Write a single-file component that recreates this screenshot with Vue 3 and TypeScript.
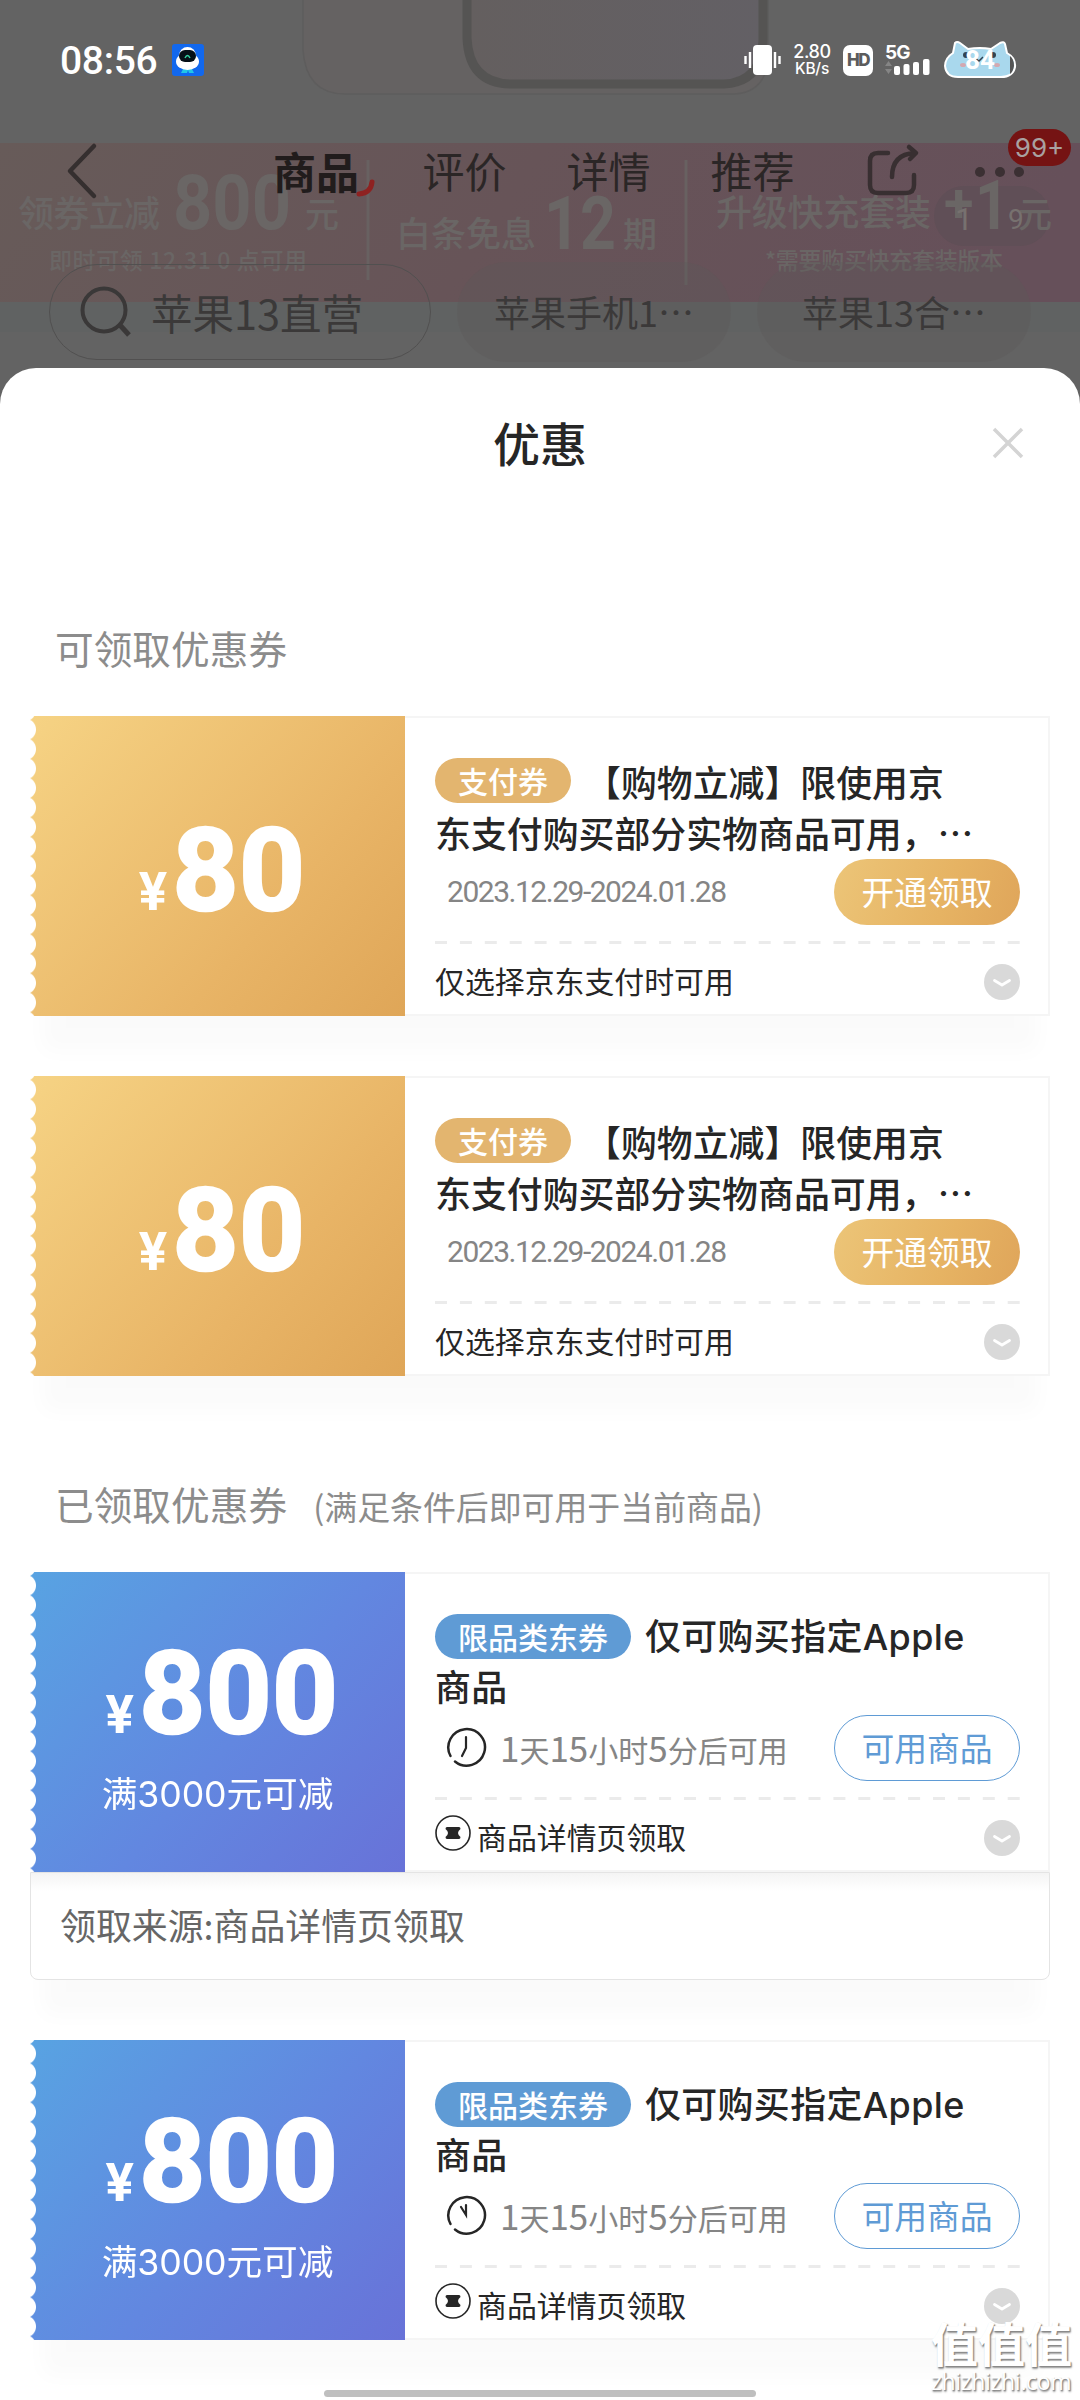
<script setup lang="ts">
interface Coupon {
  id: number
  tone: 'gold' | 'blue'
  amount: string
  condition?: string
  tag: string
  lines: [string, string]
  date?: string
  countdown?: { text: string; big: boolean }[]
  hands?: string
  action: string
  foot: string
  note?: string
}

interface Section {
  title: string
  hint?: string
  coupons: Coupon[]
}

const countdown = [
  { text: '1', big: true },
  { text: '天', big: false },
  { text: '15', big: true },
  { text: '小时', big: false },
  { text: '5', big: true },
  { text: '分后可用', big: false },
]

const gold = (id: number): Coupon => ({
  id,
  tone: 'gold',
  amount: '80',
  tag: '支付券',
  lines: ['【购物立减】限使用京', '东支付购买部分实物商品可用，⋯'],
  date: '2023.12.29-2024.01.28',
  action: '开通领取',
  foot: '仅选择京东支付时可用',
})

const blue = (id: number, hands: string, note?: string): Coupon => ({
  id,
  tone: 'blue',
  amount: '800',
  condition: '满3000元可减',
  tag: '限品类东券',
  lines: ['仅可购买指定Apple', '商品'],
  countdown,
  hands,
  action: '可用商品',
  foot: '商品详情页领取',
  note,
})

const sections: Section[] = [
  { title: '可领取优惠券', coupons: [gold(1), gold(2)] },
  {
    title: '已领取优惠券',
    hint: '(满足条件后即可用于当前商品)',
    coupons: [
      blue(3, 'M21 11V22L17 30', '领取来源:商品详情页领取'),
      blue(4, 'M21 11V21L16 13'),
    ],
  },
]

const tabs = ['商品', '评价', '详情', '推荐']
</script>

<template>
  <div class="screen">
    <svg class="scene" width="1080" height="400" viewBox="0 0 1080 400">
      <defs>
        <linearGradient id="banner" x1="0" x2="1" y1="0" y2="0.1">
          <stop offset="0" stop-color="#675b59" />
          <stop offset="0.5" stop-color="#675458" />
          <stop offset="1" stop-color="#66505a" />
        </linearGradient>
        <linearGradient id="glass" x1="0" x2="1" y1="0" y2="0">
          <stop offset="0" stop-color="#645f5f" />
          <stop offset="1" stop-color="#636065" />
        </linearGradient>
      </defs>
      <path d="M303 -5V50Q306 94 345 94H735Q765 92 768 60V-5Z" fill="#656262" stroke="#5e5d5d" stroke-width="1.5" />
      <path d="M467 -5V38Q469 84 512 84H724Q762 82 763 40V-5Z" fill="url(#glass)" stroke="#555453" stroke-width="9" />
      <rect y="143" width="1080" height="159" fill="url(#banner)" />
      <rect y="302" width="1080" height="30" fill="#606262" />
      <path d="M368 160V280M686 160V285" stroke="#686161" stroke-width="3" />
      <g class="promo">
        <text x="18" y="227" font-size="36" textLength="142">领券立减</text>
        <text x="173" y="229" font-size="76" class="num" textLength="118" lengthAdjust="spacingAndGlyphs">800</text>
        <text x="305" y="227" font-size="34">元</text>
        <text x="49" y="269" font-size="23" textLength="258">即时可领 12.31 0 点可用</text>
        <text x="396" y="247" font-size="35" textLength="140">白条免息</text>
        <text x="544" y="249" font-size="74" class="num" textLength="72" lengthAdjust="spacingAndGlyphs">12</text>
        <text x="623" y="247" font-size="34">期</text>
        <text x="716" y="226" font-size="36" textLength="215">升级快充套装</text>
        <rect x="934" y="186" width="116" height="60" rx="30" fill="#604f57" />
        <text x="944" y="222" font-size="54" class="num">+</text>
        <text x="975" y="229" font-size="68" class="num" textLength="34" lengthAdjust="spacingAndGlyphs">1</text>
        <text x="1018" y="227" font-size="34">元</text>
        <text x="765" y="269" font-size="23" textLength="238">*需要购买快充套装版本</text>
      </g>
      <text x="955" y="230" font-size="32" fill="#77716f" class="page">1</text>
      <text x="1008" y="229" font-size="28" fill="#77716f" class="page">9</text>
    </svg>

    <header class="status">
      <span class="clock">08:56</span>
      <svg class="app" width="32" height="32" viewBox="0 0 32 32">
        <rect width="32" height="32" rx="3" fill="#1268ee" />
        <path d="M11 25L9 29H15L16 26L17 29H22L20 25Z" fill="#22c6e6" />
        <ellipse cx="15.500" cy="17.500" rx="11.500" ry="8.500" fill="#fff" />
        <circle cx="15.500" cy="11.500" r="8.500" fill="#fff" />
        <rect x="7" y="6" width="17" height="12" rx="6" fill="#061018" />
        <path d="M13 14Q15.500 9 18 14" fill="none" stroke="#35d2a2" stroke-width="1.500" />
      </svg>
      <span class="grow"></span>
      <svg width="38" height="34" viewBox="0 0 38 34" fill="#fff">
        <rect x="9" y="2" width="19" height="30" rx="4" />
        <path d="M1.500 13V21M6 9V25M31 9V25M35.500 13V21" stroke="#fff" stroke-width="2.400" />
      </svg>
      <span class="speed"><b>2.80</b><b class="unit">KB/s</b></span>
      <span class="hd">HD</span>
      <svg class="signal" width="46" height="38" viewBox="0 -4 46 38" fill="#fff">
        <text x="0" y="16" font-size="19" class="g5">5G</text>
        <rect x="9" y="23" width="6" height="9" rx="2" />
        <rect x="18.500" y="21" width="6" height="11" rx="2" />
        <rect x="28" y="19" width="6" height="13" rx="2" />
        <rect x="38" y="16" width="6.500" height="16" rx="2" />
        <path d="M0 23L3.500 18L7 23ZM0 26L3.500 31L7 26Z" fill="#858585" />
      </svg>
      <svg class="battery" width="74" height="40" viewBox="0 0 74 40">
        <path d="M10 13L12 3Q14 1 17 3L25 9Q37 7 48 9L57 3Q61 1 62 4L64 13Q73 18 72 27Q70 37 58 37H15Q3 37 2 26Q2 18 10 13Z" fill="#a9d8ed" stroke="#fff" stroke-width="2" />
        <path d="M67 16Q71 19 71 26Q70 32 67 34Z" fill="#555" />
        <circle cx="23" cy="15" r="3" fill="#324350" /><circle cx="50" cy="15" r="3" fill="#324350" />
        <path d="M32 18L36 21L40 17" fill="none" stroke="#324350" stroke-width="1.500" />
        <ellipse cx="20" cy="25" rx="3" ry="2" fill="#d3a9b1" /><ellipse cx="54" cy="25" rx="3" ry="2" fill="#d3a9b1" />
        <text x="22" y="29" font-size="26" class="level" fill="#fff">84</text>
      </svg>
    </header>

    <nav class="nav">
      <svg class="back" width="34" height="60" viewBox="0 0 34 60">
        <path d="M28 5L4 30L28 55" fill="none" stroke="#352f2f" stroke-width="4.500" stroke-linecap="round" stroke-linejoin="round" />
      </svg>
      <div class="tabs">
        <span v-for="(tab, i) in tabs" :key="tab" class="tab" :class="{ active: i === 0 }">
          {{ tab }}
          <svg v-if="i === 0" class="hook" width="20" height="20" viewBox="0 0 20 20">
            <path d="M3 16Q15 15 16 4" fill="none" stroke="#8e2221" stroke-width="5" stroke-linecap="round" />
          </svg>
        </span>
      </div>
      <svg class="share" width="56" height="56" viewBox="0 0 56 56" fill="none" stroke="#382f31" stroke-width="4.500" stroke-linecap="round" stroke-linejoin="round">
        <path d="M22 11H12Q4 11 4 19V43Q4 51 12 51H40Q48 51 48 43V33" />
        <path d="M26 35Q26 12 49 11M43 5L50 11L44 17" />
      </svg>
      <div class="more">
        <i></i><i></i><i></i>
        <span class="badge">99+</span>
      </div>
    </nav>

    <div class="chips">
      <div class="chip search">
        <svg width="54" height="54" viewBox="0 0 54 54" fill="none" stroke="#3a3838" stroke-width="4">
          <circle cx="25" cy="25" r="21.500" /><path d="M40 39L50 50" stroke-width="5" />
        </svg>
        <span>苹果13直营</span>
      </div>
      <div class="chip">苹果手机1⋯</div>
      <div class="chip">苹果13合⋯</div>
    </div>

    <main class="sheet">
      <div class="head">
        <h1>优惠</h1>
        <svg class="close" width="34" height="34" viewBox="0 0 34 34">
          <path d="M3 3L31 31M31 3L3 31" stroke="#d4d4d4" stroke-width="3.500" />
        </svg>
      </div>

      <section v-for="s in sections" :key="s.title">
        <h2>{{ s.title }}<small v-if="s.hint">{{ s.hint }}</small></h2>
        <article v-for="c in s.coupons" :key="c.id" class="coupon" :class="c.tone">
          <div class="card">
            <div class="stub">
              <div class="price"><span class="yen">¥</span>{{ c.amount }}</div>
              <div v-if="c.condition" class="cond">{{ c.condition }}</div>
            </div>
            <div class="body">
              <div class="line"><span class="tag">{{ c.tag }}</span>{{ c.lines[0] }}</div>
              <div class="line">{{ c.lines[1] }}</div>
              <div class="meta">
                <span v-if="c.date" class="date">{{ c.date }}</span>
                <template v-else>
                  <svg class="timer" width="42" height="42" viewBox="0 0 42 42" fill="none" stroke="#262626" stroke-width="2.500" stroke-linecap="round">
                    <path d="M5.500 30A18.300 18.300 0 1 1 10 35.500" />
                    <path :d="c.hands" stroke-width="2.200" />
                  </svg>
                  <span class="left"><span v-for="(p, i) in c.countdown" :key="i" :class="{ big: p.big }">{{ p.text }}</span></span>
                </template>
                <button class="btn">{{ c.action }}</button>
              </div>
              <svg class="dash" width="585" height="3"><path d="M0 1.500H585" stroke="#ebebeb" stroke-width="3" stroke-dasharray="12 12.900" /></svg>
              <div class="foot">
                <svg v-if="c.tone === 'blue'" class="ticket" width="36" height="36" viewBox="0 0 36 36">
                  <circle cx="18" cy="18" r="17" fill="none" stroke="#262626" stroke-width="1.600" />
                  <path d="M12 12H24Q25.500 12 25.500 14Q23 16 23 18Q23 20 25.500 22Q25.500 24 24 24H12Q10.500 24 10.500 22Q13 20 13 18Q13 16 10.500 14Q10.500 12 12 12Z" fill="#262626" />
                </svg>
                <span>{{ c.foot }}</span>
                <svg class="chev" width="36" height="36" viewBox="0 0 36 36">
                  <circle cx="18" cy="18" r="18" fill="#d9d9d9" />
                  <path d="M10.500 16.500L18 21L25.500 16.500" fill="none" stroke="#fff" stroke-width="2.800" stroke-linecap="round" stroke-linejoin="round" />
                </svg>
              </div>
            </div>
          </div>
          <div v-if="c.note" class="note">{{ c.note }}</div>
        </article>
      </section>
    </main>

    <div class="homebar"></div>
    <div class="mark"><b>值值值</b><span>zhizhizhi.com</span></div>
  </div>
</template>

<style>
body {
  background: #fff;
  overflow: hidden;
}
</style>

<style scoped>
.screen {
  position: relative;
  width: 1080px;
  height: 2400px;
  overflow: hidden;
  background: #636363;
  font-family: "Noto Sans CJK SC", sans-serif;
  color: #262626;
}
.scene { position: absolute; left: 0; top: 0; }
.promo { fill: #6a6665; font-weight: 500; }
.num { font-family: Roboto, sans-serif; font-weight: 700; }
.page { font-family: Roboto, sans-serif; }

.status {
  position: relative;
  display: flex;
  align-items: center;
  height: 120px;
  padding: 0 63px 0 60px;
  color: #fff;
}
.clock { font: 500 39px/46px Roboto, sans-serif; width: 112px; margin-top: 2px; letter-spacing: -0.3px; }
.grow { flex: 1; }
.speed {
  display: flex;
  flex-direction: column;
  align-items: center;
  width: 38px;
  margin: 0 12px 0 11px;
  font: 600 18px/17px Inter, sans-serif;
}
.speed b { font-weight: 500; letter-spacing: -0.4px; }
.speed .unit { font-size: 15.500px; letter-spacing: -0.2px; }
.hd {
  width: 30px;
  height: 31px;
  border-radius: 7px;
  background: #fff;
  color: #5c5c5c;
  font: 800 17px/31px Inter, sans-serif;
  text-align: center;
  letter-spacing: -1.5px;
}
.signal { margin: -4px 0 0 12px; }
.g5 { font-family: Inter, sans-serif; font-weight: 700; letter-spacing: -0.8px; }
.battery { margin-left: 12px; }
.level { font-family: Roboto, sans-serif; font-weight: 700; }

.nav {
  position: relative;
  display: flex;
  align-items: center;
  height: 104px;
  padding-left: 66px;
}
.back { margin-bottom: 2px; }
.tabs { display: flex; margin-left: 173px; gap: 58.500px; }
.tab { position: relative; font-size: 42px; line-height: 60px; width: 85.500px; color: #2b2626; margin-top: -4px; white-space: nowrap; }
.tab.active { width: 91px; font-size: 43px; font-weight: 700; color: #211c1c; }
.hook { position: absolute; left: 83px; top: 38px; }
.share { margin-left: 70px; margin-bottom: 4px; }
.more { position: relative; display: flex; gap: 9.500px; margin-left: 53px; }
.more i { width: 10px; height: 10px; border-radius: 50%; background: #3b3033; }
.badge {
  position: absolute;
  left: 33px;
  top: -38px;
  width: 63px;
  height: 37px;
  border-radius: 19px;
  background: #751313;
  color: #a9a1a1;
  font: 400 26px/37px Inter, sans-serif;
  text-align: center;
}
.chips { position: relative; display: flex; align-items: center; margin-top: 38px; height: 100px; padding-left: 49px; gap: 26px; }
.chip {
  box-sizing: border-box;
  width: 274px;
  height: 100px;
  border-radius: 50px;
  background: rgba(91, 88, 88, 0.35);
  font: 400 36px/99px "Noto Sans CJK SC", sans-serif;
  color: #3b3939;
  text-align: center;
}
.chip.search {
  display: flex;
  align-items: center;
  width: 382px;
  height: 96px;
  padding-left: 29px;
  gap: 18px;
  border: 1.500px solid #515050;
  background: none;
  font-size: 41.500px;
  line-height: 92px;
}

.sheet {
  position: relative;
  margin-top: 6px;
  height: 2032px;
  border-radius: 36px 36px 0 0;
  background: #fff;
}
.head { position: relative; height: 222px; text-align: center; }
h1 { margin: 0; padding-top: 40px; font-size: 47px; font-weight: 500; line-height: 68px; }
.close { position: absolute; right: 55px; top: 58px; }
h2 {
  margin: 0;
  padding-left: 55px;
  height: 126px;
  font-size: 38.700px;
  font-weight: 400;
  line-height: 114px;
  color: #8c8c8c;
}
h2 small { margin-left: 26px; font-size: 32.900px; }
section + section { padding-top: 10px; }
.coupon { width: 1020px; margin: 0 0 60px 30px; box-shadow: 0 48px 20px -12px rgba(0, 0, 0, 0.02); }
.card { display: flex; height: 300px; background: #fff; }
.stub {
  display: flex;
  flex-direction: column;
  align-items: center;
  width: 375px;
  color: #fff;
  -webkit-mask: radial-gradient(circle at -5px 50%, transparent 10.500px, #000 11.500px) 0 3.800px / 100% 19.500px repeat-y;
  mask: radial-gradient(circle at -5px 50%, transparent 10.500px, #000 11.500px) 0 3.800px / 100% 19.500px repeat-y;
}
.gold .stub { background: linear-gradient(131deg, #f6d384, #e8b466 65%, #dfa658); justify-content: center; }
.blue .stub { background: linear-gradient(131deg, #58a3e2, #6287e0 55%, #6872d8); }
.price {
  height: 116px;
  padding-left: 9px;
  line-height: 116px;
  font-family: Roboto, sans-serif;
  font-weight: 700;
  font-size: 115px;
  letter-spacing: 0.4px;
  white-space: nowrap;
  -webkit-text-stroke: 2.5px #fff;
}
.gold .price { margin-top: 9px; }
.blue .price { margin-top: 64px; }
.yen { font-size: 53px; margin-right: 5px; -webkit-text-stroke: 0; }
.cond { margin-top: 17px; font: 400 35.700px/50px Inter, "Noto Sans CJK SC", sans-serif; letter-spacing: -0.1px; }
.body {
  flex: 1;
  box-sizing: border-box;
  padding: 39px 30px 0;
  box-shadow: inset -2px 2px #f5f5f5, inset 0 -2px #f5f5f5;
}
.line {
  display: flex;
  align-items: center;
  height: 51px;
  font-size: 35.900px;
  font-weight: 500;
  line-height: 48px;
  white-space: nowrap;
}
.blue .line { font-family: Inter, "Noto Sans CJK SC", sans-serif; letter-spacing: 0.4px; line-height: 52px; }
.tag {
  height: 45px;
  margin-right: 14px;
  padding: 0 23px;
  border-radius: 23px;
  font-family: "Noto Sans CJK SC", sans-serif;
  font-size: 30px;
  line-height: 44px;
  letter-spacing: 0;
  color: #fff;
}
.gold .tag { background: #e3b56f; }
.blue .tag { background: #5f9bd5; }
.meta { display: flex; align-items: center; height: 66px; margin-top: 2px; }
.date { margin-left: 12px; font: 400 30px/40px Roboto, sans-serif; letter-spacing: -1.480px; color: #858585; }
.timer { margin: 0 13px 2px 10px; }
.left { display: flex; align-items: baseline; font-size: 30px; color: #858585; line-height: 50px; }
.big { font-size: 35px; }
.btn {
  width: 186px;
  height: 66px;
  margin: 0 0 0 auto;
  padding: 0 0 3px;
  border: 0;
  border-radius: 33px;
  font: 400 32.800px/60px "Noto Sans CJK SC", sans-serif;
}
.gold .btn { background: linear-gradient(110deg, #ecc578, #e6b363 60%, #dfa55a); color: #fff; }
.blue .btn { border: 1.500px solid #5f9bd5; background: #fff; color: #5f9bd5; }
.dash { display: block; margin-top: 16px; }
.foot { display: flex; align-items: center; height: 72px; font-size: 29.900px; line-height: 40px; }
.foot span { margin-top: -1px; }
.ticket { margin: 0 6px 6px 0; }
.chev { margin-left: auto; margin-top: 4px; }
.note {
  box-sizing: border-box;
  height: 108px;
  padding-left: 29px;
  border: 1.500px solid #e4e4e4;
  border-radius: 0 0 8px 8px;
  background: linear-gradient(#f4f4f4, #fff 18px);
  font-size: 35.900px;
  line-height: 103px;
  color: #666;
}
.homebar { position: absolute; left: 324px; top: 2390px; width: 432px; height: 7px; border-radius: 4px; background: #bfbfbf; }
.mark {
  position: absolute;
  left: 931px;
  top: 2316px;
  display: flex;
  flex-direction: column;
  color: #fff;
  text-shadow: 1px 1px 1px #888, 1px 2px 2px #999;
}
.mark b { font-size: 47px; font-weight: 700; line-height: 52px; }
.mark span { font: 500 23px/26px "Open Sans", sans-serif; letter-spacing: -0.3px; }
</style>
